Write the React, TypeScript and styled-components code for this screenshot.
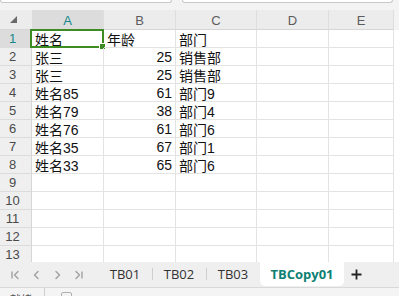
import React from 'react'
import styled, { createGlobalStyle } from 'styled-components'

const GlobalStyle = createGlobalStyle`
  html, body { margin: 0; padding: 0; background: #fff; }
  body { font-family: "Liberation Sans", "Noto Sans CJK SC", sans-serif; }
`

const cols = [
  { key: 'A', width: 72 },
  { key: 'B', width: 72 },
  { key: 'C', width: 81 },
  { key: 'D', width: 72 },
  { key: 'E', width: 65 },
]

const rows: string[][] = [
  ['姓名', '年龄', '部门'],
  ['张三', '25', '销售部'],
  ['张三', '25', '销售部'],
  ['姓名85', '61', '部门9'],
  ['姓名79', '38', '部门4'],
  ['姓名76', '61', '部门6'],
  ['姓名35', '67', '部门1'],
  ['姓名33', '65', '部门6'],
  [], [], [], [], [],
]

const tabs = ['TB01', 'TB02', 'TB03']

const Page = styled.div`
  width: 399px;
  height: 296px;
  overflow: hidden;
  display: flex;
  flex-direction: column;
  background: #fff;
`

const TopStrip = styled.div`
  height: 10px;
  flex: none;
  background: #f3f3f3;
  display: flex;
  gap: 10px;
  padding-right: 6px;
`

const InputBox = styled.div<{ $w?: number }>`
  height: 2px;
  ${p => (p.$w ? `width: ${p.$w}px;` : 'flex: 1;')}
  background: #fff;
  border: 1px solid #c9c9c9;
  border-top: none;
  border-radius: 0 0 4px 4px;
`

const Sheet = styled.div`
  height: 252px;
  flex: none;
  overflow: hidden;
  display: grid;
  grid-template-columns: 32px ${cols.map(c => c.width + 'px').join(' ')} 5px;
  grid-auto-rows: 18px;
  grid-template-rows: 20px;
  align-content: start;
`

const Corner = styled.div`
  background: #ececec;
  border-bottom: 1px solid #d6d6d6;
  display: flex;
  align-items: center;
  justify-content: center;
  padding-right: 6px;
`

const ColHead = styled.div<{ $active?: boolean }>`
  background: ${p => (p.$active ? '#dcdcdc' : '#ececec')};
  color: ${p => (p.$active ? '#14878a' : '#5c5c5c')};
  border-bottom: 1px solid #d6d6d6;
  border-right: 1px solid #dedede;
  display: flex;
  align-items: center;
  justify-content: center;
  font-size: 13px;
  padding-top: 1px;
  box-sizing: border-box;
`

const RowHead = styled.div<{ $active?: boolean }>`
  background: ${p => (p.$active ? '#dcdcdc' : '#efefef')};
  color: ${p => (p.$active ? '#14878a' : '#4a4a4a')};
  border-bottom: 1px solid #dcdcdc;
  border-right: 1px solid #d6d6d6;
  display: flex;
  align-items: center;
  justify-content: center;
  padding-right: 6px;
  font-size: 13px;
  box-sizing: border-box;
`

const Cell = styled.div<{ $num?: boolean }>`
  position: relative;
  border-bottom: 1px solid #e3e3e3;
  border-right: 1px solid #e3e3e3;
  box-sizing: border-box;
  display: flex;
  align-items: center;
  justify-content: ${p => (p.$num ? 'flex-end' : 'flex-start')};
  padding: 0 3px;
  font-size: 14px;
  color: #111;
  white-space: nowrap;
  overflow: visible;
`

const Filler = styled.div<{ $head?: boolean }>`
  background: ${p => (p.$head ? '#f3f3f3' : '#fff')};
`

const Selection = styled.div`
  position: absolute;
  left: -2px;
  top: -1px;
  right: -1px;
  bottom: -1px;
  border: 2px solid #3f8b23;
  pointer-events: none;
  &::after {
    content: '';
    position: absolute;
    right: -4px;
    bottom: -4px;
    width: 5px;
    height: 5px;
    background: #3f8b23;
    border: 1px solid #fff;
  }
`

const TabBar = styled.div`
  height: 26px;
  flex: none;
  background: #efefef;
  border-bottom: 1px solid #d9d9d9;
  display: flex;
  align-items: stretch;
  padding-right: 6px;
  box-sizing: border-box;
`

const NavGroup = styled.div`
  width: 98px;
  display: flex;
  align-items: center;
  gap: 8px;
  padding-left: 9px;
  box-sizing: border-box;
`

const NavBtn = styled.span`
  width: 13px;
  display: flex;
  justify-content: center;
  color: #a2a2a2;
`

const Tab = styled.div<{ $active?: boolean }>`
  width: ${p => (p.$active ? 84 : 54)}px;
  display: flex;
  align-items: center;
  justify-content: center;
  font-size: 13px;
  font-family: "Open Sans", "Liberation Sans", sans-serif;
  color: ${p => (p.$active ? '#0e7f73' : '#333')};
  font-weight: ${p => (p.$active ? 700 : 400)};
  background: ${p => (p.$active ? '#fff' : 'transparent')};
  border-radius: 0 0 5px 5px;
  margin-bottom: 1px;
  position: relative;
  & + &::before {
    content: '';
    position: absolute;
    left: 0;
    top: 6px;
    bottom: 6px;
    border-left: 1px solid ${p => (p.$active ? 'transparent' : '#cfcfcf')};
  }
`

const AddTab = styled.div`
  width: 24px;
  display: flex;
  align-items: center;
  justify-content: center;
  color: #222;
`

const StatusBar = styled.div`
  flex: 1;
  background: #f4f4f4;
  display: flex;
  align-items: flex-start;
  overflow: hidden;
  font-size: 11px;
  color: #555;
`

const StatusText = styled.span`
  padding: 3px 12px 0 10px;
  border-right: 1px solid #d0d0d0;
  height: 20px;
`

const StatusBox = styled.span`
  margin: 4px 0 0 16px;
  width: 9px;
  height: 9px;
  border: 1px solid #b0b0b0;
  border-radius: 2px;
`

const Arrow: React.FC<{ d: string; bar?: 'l' | 'r' }> = ({ d, bar }) => (
  <svg width="9" height="10" viewBox="0 0 9 10" fill="none" stroke="currentColor" strokeWidth="1.4">
    <path d={d} strokeLinecap="round" strokeLinejoin="round" />
    {bar === 'l' && <path d="M1 1.5v7" />}
    {bar === 'r' && <path d="M8 1.5v7" />}
  </svg>
)

export default function App() {
  return (
    <Page>
      <GlobalStyle />
      <TopStrip>
        <InputBox $w={170} />
        <InputBox />
      </TopStrip>
      <Sheet>
        <Corner>
          <svg width="7" height="7" viewBox="0 0 7 7">
            <path d="M7 0V7H0Z" fill="#6a6a6a" />
          </svg>
        </Corner>
        {cols.map((c, i) => (
          <ColHead key={c.key} $active={i === 0}>{c.key}</ColHead>
        ))}
        <Filler $head />
        {rows.map((r, ri) => (
          <React.Fragment key={ri}>
            <RowHead $active={ri === 0}>{ri + 1}</RowHead>
            {cols.map((c, ci) => {
              const v = r[ci] ?? ''
              const num = v !== '' && /^\d+$/.test(v)
              return (
                <Cell key={c.key} $num={num}>
                  {v}
                  {ri === 0 && ci === 0 && <Selection />}
                </Cell>
              )
            })}
            <Filler />
          </React.Fragment>
        ))}
      </Sheet>
      <TabBar>
        <NavGroup>
          <NavBtn><Arrow d="M7 1.5L3.5 5L7 8.5" bar="l" /></NavBtn>
          <NavBtn><Arrow d="M6 1.5L2.5 5L6 8.5" /></NavBtn>
          <NavBtn><Arrow d="M3 1.5L6.5 5L3 8.5" /></NavBtn>
          <NavBtn><Arrow d="M2 1.5L5.5 5L2 8.5" bar="r" /></NavBtn>
        </NavGroup>
        {tabs.map(t => (
          <Tab key={t}>{t}</Tab>
        ))}
        <Tab $active>TBCopy01</Tab>
        <AddTab>
          <svg width="11" height="11" viewBox="0 0 11 11" stroke="#222" strokeWidth="1.8">
            <path d="M5.5 0.5v10M0.5 5.5h10" />
          </svg>
        </AddTab>
      </TabBar>
      <StatusBar>
        <StatusText>就绪</StatusText>
        <StatusBox />
      </StatusBar>
    </Page>
  )
}
